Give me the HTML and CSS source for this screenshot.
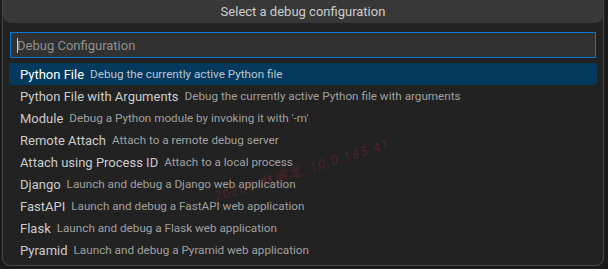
FILE: index.html
```html
<!DOCTYPE html>
<html lang="en">
<head>
  <meta charset="UTF-8">
  <title>Select a debug configuration</title>
  <link rel="stylesheet" href="styles.css">
</head>
<body>

<div class="quick-input">
  <div class="title">Select a debug configuration</div>

  <div class="filter">
    <span class="caret"></span>
    <input type="text" placeholder="Debug Configuration">
  </div>

  <ul class="list">
    <li class="row selected"><span class="label">Python File</span><span class="desc">Debug the currently active Python file</span></li>
    <li class="row"><span class="label">Python File with Arguments</span><span class="desc">Debug the currently active Python file with arguments</span></li>
    <li class="row"><span class="label">Module</span><span class="desc">Debug a Python module by invoking it with '-m'</span></li>
    <li class="row"><span class="label">Remote Attach</span><span class="desc">Attach to a remote debug server</span></li>
    <li class="row"><span class="label">Attach using Process ID</span><span class="desc">Attach to a local process</span></li>
    <li class="row"><span class="label">Django</span><span class="desc">Launch and debug a Django web application</span></li>
    <li class="row"><span class="label">FastAPI</span><span class="desc">Launch and debug a FastAPI web application</span></li>
    <li class="row"><span class="label">Flask</span><span class="desc">Launch and debug a Flask web application</span></li>
    <li class="row"><span class="label">Pyramid</span><span class="desc">Launch and debug a Pyramid web application</span></li>
  </ul>

  <div class="watermark">20260 林丽龙, 10.0.185.41</div>
</div>

</body>
</html>
```

FILE: styles.css
```css
* {
  box-sizing: border-box;
}

body {
  margin: 0;
  background: #1b1b1b;
  font-family: Roboto, 'Noto Sans', 'Noto Sans CJK SC', sans-serif;
  font-size: 13px;
  color: #cccccc;
}

.quick-input {
  position: relative;
  margin-left: 2px;
  width: 602px;
  height: 266px;
  background: #222222;
  border: 1px solid #454545;
  border-top: none;
  border-radius: 0 0 8px 8px;
  overflow: hidden;
}

.title {
  height: 23px;
  line-height: 23px;
  text-align: center;
  background: #383838;
  border-radius: 0 0 8px 8px;
  color: #cccccc;
}

.filter {
  position: relative;
  margin: 9px 7px 5px 7px;
  height: 26px;
  border: 1px solid #0078d4;
  background: #313131;
}

.filter input {
  width: 100%;
  height: 100%;
  border: none;
  outline: none;
  background: transparent;
  padding: 0 6px;
  font: inherit;
  color: #cccccc;
}

.filter input::placeholder {
  color: #8f8f8f;
}

.caret {
  position: absolute;
  left: 6px;
  top: 5px;
  width: 1px;
  height: 15px;
  background: #cccccc;
}

.list {
  list-style: none;
  margin: 0 6px;
  padding: 0;
}

.row {
  display: flex;
  align-items: center;
  height: 22px;
  padding: 0 11px;
  border-radius: 3px;
  white-space: nowrap;
}

.row.selected {
  background: #04395e;
}

.label {
  color: #cccccc;
  margin-right: 6px;
}

.row.selected .label {
  color: #ffffff;
}

.desc {
  color: #a0a0a0;
  font-size: 11.7px;
}

.row.selected .desc {
  color: #b8c6d2;
}

.watermark {
  position: absolute;
  left: 214px;
  top: 186px;
  transform: rotate(-17deg);
  transform-origin: left bottom;
  font-style: italic;
  font-size: 13px;
  letter-spacing: 1.5px;
  color: rgba(170, 40, 70, 0.32);
  pointer-events: none;
  white-space: nowrap;
}
```
